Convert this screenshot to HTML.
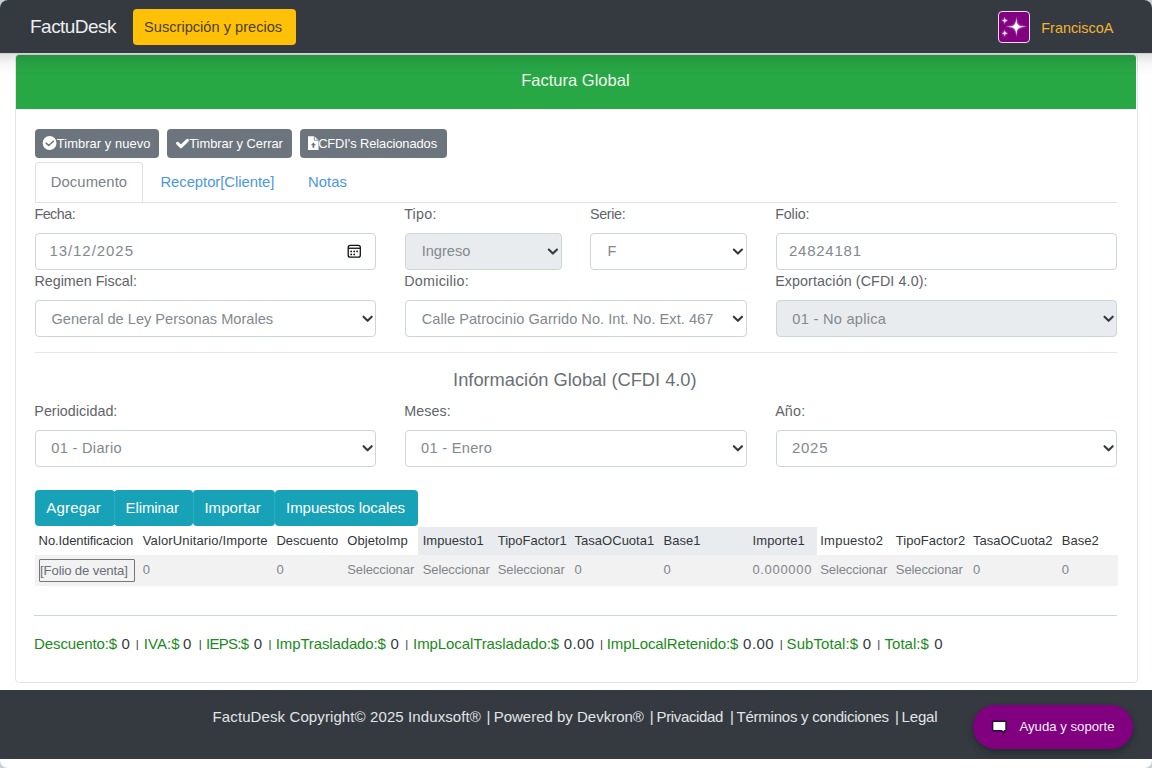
<!DOCTYPE html>
<html><head><meta charset="utf-8">
<style>
*{box-sizing:border-box;margin:0;padding:0}
html,body{width:1152px;height:768px;overflow:hidden;background:#c3d2d8}
body{font-family:"Liberation Sans",sans-serif;color:#212529;position:relative}
.x{position:absolute;white-space:nowrap;font-family:"Liberation Sans",sans-serif}
.b{position:absolute}
#page{position:absolute;left:0;top:0;width:1152px;height:768px;background:#fff;border-radius:8px;overflow:hidden}
.inp{position:absolute;border:1px solid #ced4da;border-radius:4px;background:#fff}
.dis{background:#e9ecef}
.chev{position:absolute;width:10px;height:6px}
</style></head><body>
<div id="page">
  <!-- navbar -->
  <div class="b" style="left:0;top:0;width:1152px;height:53px;background:#343a40"></div>
  <div class="b" style="left:0;top:53px;width:1152px;height:1px;background:#cfd1d3"></div>
  <div class="b" style="left:133px;top:9px;width:162.5px;height:35.5px;background:#ffc107;border-radius:4px"></div>
  <div class="b" style="left:997.5px;top:10.6px;width:32.5px;height:32.6px;background:#800080;border:1.5px solid #f3dcf3;border-radius:4px"></div>
  <svg class="b" style="left:997px;top:10px" width="34" height="34" viewBox="0 0 34 34">
    <defs><filter id="gl" x="-50%" y="-50%" width="200%" height="200%"><feGaussianBlur stdDeviation="1.1"/></filter></defs>
    <g fill="#ffb0ff" filter="url(#gl)" opacity="0.9">
      <path d="M19.3 5.8 C19.6 15.5 20.4 16.5 30 16.8 C20.4 17.1 19.6 18.1 19.3 27.4 C19 18.1 18.2 17.1 8.8 16.8 C18.2 16.5 19 15.5 19.3 5.8Z"/>
      <path d="M7.8 6.2 C8 10 8.3 10.3 12.3 10.5 C8.3 10.7 8 11 7.8 14.8 C7.6 11 7.3 10.7 3.3 10.5 C7.3 10.3 7.6 10 7.8 6.2Z"/>
      <path d="M7.8 19 C8 22.8 8.3 23.1 12.3 23.3 C8.3 23.5 8 23.8 7.8 27.6 C7.6 23.8 7.3 23.5 3.3 23.3 C7.3 23.1 7.6 22.8 7.8 19Z"/>
    </g>
    <g fill="#fff">
      <path d="M19.3 5.8 C19.6 15.5 20.4 16.5 30 16.8 C20.4 17.1 19.6 18.1 19.3 27.4 C19 18.1 18.2 17.1 8.8 16.8 C18.2 16.5 19 15.5 19.3 5.8Z"/>
      <path d="M7.8 6.2 C8 10 8.3 10.3 12.3 10.5 C8.3 10.7 8 11 7.8 14.8 C7.6 11 7.3 10.7 3.3 10.5 C7.3 10.3 7.6 10 7.8 6.2Z"/>
      <path d="M7.8 19 C8 22.8 8.3 23.1 12.3 23.3 C8.3 23.5 8 23.8 7.8 27.6 C7.6 23.8 7.3 23.5 3.3 23.3 C7.3 23.1 7.6 22.8 7.8 19Z"/>
    </g>
  </svg>
  <!-- card -->
  <div class="b" style="left:15px;top:54px;width:1122.5px;height:628.5px;border:1px solid #e2e4e6;border-radius:4px;background:#fff"></div>
  <div class="b" style="left:16px;top:55px;width:1120.2px;height:54px;background:#28a745;border-radius:3px 3px 0 0"></div>
  <!-- nav shadow -->
  <div class="b" style="left:0;top:54px;width:1152px;height:22px;background:linear-gradient(rgba(0,0,0,.12),rgba(0,0,0,.03) 45%,rgba(0,0,0,0))"></div>
  <!-- secondary buttons -->
  <div class="b" style="left:35px;top:128.6px;width:124px;height:29.7px;background:#6c757d;border-radius:4px"></div>
  <div class="b" style="left:167px;top:128.6px;width:125px;height:29.7px;background:#6c757d;border-radius:4px"></div>
  <div class="b" style="left:299.6px;top:128.6px;width:147px;height:29.7px;background:#6c757d;border-radius:4px"></div>
  <svg class="b" style="left:0;top:0" width="460" height="170">
    <circle cx="49.6" cy="143" r="6.9" fill="#fff"/>
    <path d="M46.1 143.1 L48.6 145.5 L53.4 141.2" fill="none" stroke="#6c757d" stroke-width="1.5" stroke-linecap="round" stroke-linejoin="round"/>
    <path d="M177.6 143.3 L181 146.6 L187.4 140.3" fill="none" stroke="#fff" stroke-width="3.1" stroke-linecap="round" stroke-linejoin="round"/>
    <path d="M308 136.2 H314.3 L318.5 140.2 V150 H308 Z" fill="#fff"/>
    <path d="M314.3 136.2 V140.2 H318.5" fill="none" stroke="#6c757d" stroke-width="0.8"/>
    <path d="M313.4 142.4 L316 145.2 H314.3 V147.8 H312.5 V145.2 H310.8 Z" fill="#6c757d"/>
  </svg>
  <!-- tabs -->
  <div class="b" style="left:35px;top:201.5px;width:1082px;height:1px;background:#dee2e6"></div>
  <div class="b" style="left:35.3px;top:162.4px;width:108px;height:40.1px;border:1px solid #dee2e6;border-bottom:none;border-radius:4px 4px 0 0;background:#fff"></div>
  <!-- row 1 inputs -->
  <div class="inp" style="left:35px;top:233px;width:341px;height:37px"></div>
  <div class="inp dis" style="left:405px;top:233px;width:157px;height:37px"></div>
  <div class="inp" style="left:590px;top:233px;width:157px;height:37px"></div>
  <div class="inp" style="left:776px;top:233px;width:341px;height:37px"></div>
  <!-- row 2 -->
  <div class="inp" style="left:35px;top:300px;width:341px;height:37px"></div>
  <div class="inp" style="left:405px;top:300px;width:342px;height:37px"></div>
  <div class="inp dis" style="left:776px;top:300px;width:341px;height:37px"></div>
  <div class="b" style="left:35px;top:352px;width:1082px;height:1px;background:#e3e6e9"></div>
  <!-- row 3 -->
  <div class="inp" style="left:35px;top:430px;width:341px;height:37px"></div>
  <div class="inp" style="left:405px;top:430px;width:342px;height:37px"></div>
  <div class="inp" style="left:776px;top:430px;width:341px;height:37px"></div>
  <svg class="b" style="left:0;top:0" width="1152" height="480">
    <g fill="none" stroke="#343a40" stroke-width="2.1" stroke-linecap="round" stroke-linejoin="round">
      <path d="M548.8 249.5 L552.9 253.6 L557 249.5"/>
      <path d="M733.8 249.5 L737.9 253.6 L742 249.5"/>
      <path d="M363.5 316.7 L367.6 320.8 L371.7 316.7"/>
      <path d="M733.8 316.7 L737.9 320.8 L742 316.7"/>
      <path d="M1104.5 316.7 L1108.6 320.8 L1112.7 316.7"/>
      <path d="M363.5 446.2 L367.6 450.3 L371.7 446.2"/>
      <path d="M733.8 446.2 L737.9 450.3 L742 446.2"/>
      <path d="M1104.5 446.2 L1108.6 450.3 L1112.7 446.2"/>
    </g>
    <g>
      <rect x="348.2" y="245.3" width="12.1" height="11.9" rx="2" fill="none" stroke="#111" stroke-width="1.3"/>
      <rect x="348.2" y="247.6" width="12.1" height="1.3" fill="#111"/>
      <circle cx="351.2" cy="251.4" r="0.9" fill="#111"/><circle cx="354.2" cy="251.4" r="0.9" fill="#111"/><circle cx="357.1" cy="251.4" r="0.9" fill="#111"/>
      <circle cx="351.2" cy="254.4" r="0.9" fill="#111"/><circle cx="354.2" cy="254.4" r="0.9" fill="#111"/>
    </g>
  </svg>
  <!-- info buttons -->
  <div class="b" style="left:34.8px;top:489.5px;width:80px;height:36.3px;background:#17a2b8;border-radius:4px"></div>
  <div class="b" style="left:114.3px;top:489.5px;width:79.2px;height:36.3px;background:#17a2b8;border-radius:4px"></div>
  <div class="b" style="left:193px;top:489.5px;width:82px;height:36.3px;background:#17a2b8;border-radius:4px"></div>
  <div class="b" style="left:274.5px;top:489.5px;width:143.7px;height:36.3px;background:#17a2b8;border-radius:4px"></div>
  <div class="b" style="left:114.3px;top:493px;width:0.8px;height:29.3px;background:#1fadc2"></div>
  <div class="b" style="left:192.8px;top:493px;width:0.8px;height:29.3px;background:#1fadc2"></div>
  <div class="b" style="left:274.3px;top:493px;width:0.8px;height:29.3px;background:#1fadc2"></div>
  <!-- table -->
  <div class="b" style="left:418.3px;top:526.5px;width:398.7px;height:28.5px;background:#e9ecef"></div>
  <div class="b" style="left:35px;top:555px;width:1082.5px;height:30.5px;background:#f2f2f2"></div>
  <div class="b" style="left:38.7px;top:558.9px;width:96.2px;height:22.9px;border:1px solid #767676;border-radius:1px;background:#f2f2f2"></div>
  <div class="b" style="left:34px;top:615px;width:1083px;height:1.2px;background:#c7d7e6"></div>
  <!-- footer -->
  <div class="b" style="left:0;top:690px;width:1152px;height:68.6px;background:#343a40"></div>
  <div class="b" style="left:972.5px;top:704.6px;width:160.8px;height:44.4px;background:#800080;border-radius:22.2px;box-shadow:0 3px 7px rgba(0,0,0,.3)"></div>
  <svg class="b" style="left:984px;top:712px" width="30" height="30" viewBox="0 0 30 30">
    <path d="M8.6 9.8 Q8.6 9.2 9.2 9.2 H21.4 Q22 9.2 22 9.8 V18.1 Q22 18.7 21.4 18.7 H20.3 L19.9 21.1 L17.6 18.7 H9.2 Q8.6 18.7 8.6 18.1 Z" fill="#fff" stroke="#2a0a2a" stroke-width="1.4" stroke-linejoin="round"/>
  </svg>
<span class="x" style="left:30.06px;top:17.02px;font-size:19px;line-height:19px;color:#eceeef;letter-spacing:-0.539px">FactuDesk</span>
<span class="x" style="left:144.12px;top:20.14px;font-size:14.6px;line-height:14.6px;color:#4a4025;letter-spacing:0.005px">Suscripción y precios</span>
<span class="x" style="left:1041.34px;top:20.61px;font-size:14.4px;line-height:14.4px;color:#f2b431">FranciscoA</span>
<span class="x" style="left:521.21px;top:72.03px;font-size:16.5px;line-height:16.5px;color:#eef8ee;letter-spacing:0.014px">Factura Global</span>
<span class="x" style="left:56.73px;top:137.58px;font-size:12.9px;line-height:12.9px;color:#ffffff;letter-spacing:0.078px">Timbrar y nuevo</span>
<span class="x" style="left:189.23px;top:137.58px;font-size:12.9px;line-height:12.9px;color:#ffffff;letter-spacing:-0.024px">Timbrar y Cerrar</span>
<span class="x" style="left:318.13px;top:137.58px;font-size:12.9px;line-height:12.9px;color:#ffffff;letter-spacing:-0.094px">CFDI's Relacionados</span>
<span class="x" style="left:50.81px;top:175.47px;font-size:14.8px;line-height:14.8px;color:#7a8288;letter-spacing:0.079px">Documento</span>
<span class="x" style="left:160.41px;top:175.47px;font-size:14.8px;line-height:14.8px;color:#4a97e2;letter-spacing:-0.021px">Receptor[Cliente]</span>
<span class="x" style="left:308.11px;top:175.47px;font-size:14.8px;line-height:14.8px;color:#4a97e2;letter-spacing:0.036px">Notas</span>
<span class="x" style="left:34.44px;top:206.65px;font-size:14.3px;line-height:14.3px;color:#5f6469;letter-spacing:-0.504px">Fecha:</span>
<span class="x" style="left:404.14px;top:206.65px;font-size:14.3px;line-height:14.3px;color:#5f6469;letter-spacing:0.259px">Tipo:</span>
<span class="x" style="left:589.94px;top:206.65px;font-size:14.3px;line-height:14.3px;color:#5f6469;letter-spacing:-0.332px">Serie:</span>
<span class="x" style="left:775.14px;top:206.65px;font-size:14.3px;line-height:14.3px;color:#5f6469;letter-spacing:-0.114px">Folio:</span>
<span class="x" style="left:34.44px;top:274.10px;font-size:14.3px;line-height:14.3px;color:#5f6469">Regimen Fiscal:</span>
<span class="x" style="left:404.14px;top:274.10px;font-size:14.3px;line-height:14.3px;color:#5f6469;letter-spacing:0.292px">Domicilio:</span>
<span class="x" style="left:775.14px;top:274.10px;font-size:14.3px;line-height:14.3px;color:#5f6469;letter-spacing:0.101px">Exportación (CFDI 4.0):</span>
<span class="x" style="left:34.34px;top:404.10px;font-size:14.3px;line-height:14.3px;color:#5f6469;letter-spacing:0.029px">Periodicidad:</span>
<span class="x" style="left:404.14px;top:404.10px;font-size:14.3px;line-height:14.3px;color:#5f6469;letter-spacing:0.121px">Meses:</span>
<span class="x" style="left:775.14px;top:404.10px;font-size:14.3px;line-height:14.3px;color:#5f6469;letter-spacing:0.193px">Año:</span>
<span class="x" style="left:49.40px;top:243.30px;font-size:15px;line-height:15px;color:#83898e;letter-spacing:0.947px">13/12/2025</span>
<span class="x" style="left:421.72px;top:243.64px;font-size:14.6px;line-height:14.6px;color:#83898e;letter-spacing:-0.015px">Ingreso</span>
<span class="x" style="left:607.42px;top:243.64px;font-size:14.6px;line-height:14.6px;color:#83898e">F</span>
<span class="x" style="left:789.00px;top:243.30px;font-size:15px;line-height:15px;color:#83898e;letter-spacing:0.750px">24824181</span>
<span class="x" style="left:51.42px;top:312.24px;font-size:14.6px;line-height:14.6px;color:#83898e;letter-spacing:0.008px">General de Ley Personas Morales</span>
<span class="x" style="left:421.72px;top:312.24px;font-size:14.6px;line-height:14.6px;color:#83898e;letter-spacing:0.027px">Calle Patrocinio Garrido No. Int. No. Ext. 467</span>
<span class="x" style="left:792.32px;top:312.24px;font-size:14.6px;line-height:14.6px;color:#83898e;letter-spacing:0.273px">01 - No aplica</span>
<span class="x" style="left:453.10px;top:370.71px;font-size:18.3px;line-height:18.3px;color:#6a7075;letter-spacing:-0.012px">Información Global (CFDI 4.0)</span>
<span class="x" style="left:51.22px;top:441.24px;font-size:14.6px;line-height:14.6px;color:#83898e;letter-spacing:0.317px">01 - Diario</span>
<span class="x" style="left:421.02px;top:441.24px;font-size:14.6px;line-height:14.6px;color:#83898e;letter-spacing:0.294px">01 - Enero</span>
<span class="x" style="left:792.00px;top:440.20px;font-size:15px;line-height:15px;color:#83898e;letter-spacing:0.708px">2025</span>
<span class="x" style="left:46.30px;top:500.30px;font-size:15px;line-height:15px;color:#ffffff;letter-spacing:0.171px">Agregar</span>
<span class="x" style="left:125.60px;top:500.30px;font-size:15px;line-height:15px;color:#ffffff;letter-spacing:-0.098px">Eliminar</span>
<span class="x" style="left:204.40px;top:500.30px;font-size:15px;line-height:15px;color:#ffffff;letter-spacing:0.063px">Importar</span>
<span class="x" style="left:286.10px;top:500.30px;font-size:15px;line-height:15px;color:#ffffff;letter-spacing:-0.066px">Impuestos locales</span>
<span class="x" style="left:38.62px;top:533.80px;font-size:13px;line-height:13px;color:#33373b;letter-spacing:-0.095px">No.Identificacion</span>
<span class="x" style="left:142.72px;top:533.80px;font-size:13px;line-height:13px;color:#33373b;letter-spacing:0.141px">ValorUnitario/Importe</span>
<span class="x" style="left:276.42px;top:533.80px;font-size:13px;line-height:13px;color:#33373b;letter-spacing:-0.045px">Descuento</span>
<span class="x" style="left:347.22px;top:533.80px;font-size:13px;line-height:13px;color:#33373b;letter-spacing:0.064px">ObjetoImp</span>
<span class="x" style="left:422.72px;top:533.80px;font-size:13px;line-height:13px;color:#33373b;letter-spacing:0.037px">Impuesto1</span>
<span class="x" style="left:497.72px;top:533.80px;font-size:13px;line-height:13px;color:#33373b;letter-spacing:0.011px">TipoFactor1</span>
<span class="x" style="left:574.62px;top:533.80px;font-size:13px;line-height:13px;color:#33373b;letter-spacing:0.010px">TasaOCuota1</span>
<span class="x" style="left:663.52px;top:533.80px;font-size:13px;line-height:13px;color:#33373b;letter-spacing:0.031px">Base1</span>
<span class="x" style="left:752.42px;top:533.80px;font-size:13px;line-height:13px;color:#33373b;letter-spacing:0.155px">Importe1</span>
<span class="x" style="left:820.22px;top:533.80px;font-size:13px;line-height:13px;color:#33373b;letter-spacing:0.250px">Impuesto2</span>
<span class="x" style="left:895.82px;top:533.80px;font-size:13px;line-height:13px;color:#33373b;letter-spacing:0.051px">TipoFactor2</span>
<span class="x" style="left:972.92px;top:533.80px;font-size:13px;line-height:13px;color:#33373b;letter-spacing:0.010px">TasaOCuota2</span>
<span class="x" style="left:1061.82px;top:533.80px;font-size:13px;line-height:13px;color:#33373b;letter-spacing:0.031px">Base2</span>
<span class="x" style="left:142.72px;top:562.90px;font-size:13px;line-height:13px;color:#80858a">0</span>
<span class="x" style="left:276.42px;top:562.90px;font-size:13px;line-height:13px;color:#80858a">0</span>
<span class="x" style="left:347.22px;top:562.90px;font-size:13px;line-height:13px;color:#80858a;letter-spacing:-0.094px">Seleccionar</span>
<span class="x" style="left:422.72px;top:562.90px;font-size:13px;line-height:13px;color:#80858a;letter-spacing:-0.094px">Seleccionar</span>
<span class="x" style="left:497.72px;top:562.90px;font-size:13px;line-height:13px;color:#80858a;letter-spacing:-0.094px">Seleccionar</span>
<span class="x" style="left:574.62px;top:562.90px;font-size:13px;line-height:13px;color:#80858a">0</span>
<span class="x" style="left:663.52px;top:562.90px;font-size:13px;line-height:13px;color:#80858a">0</span>
<span class="x" style="left:752.42px;top:562.90px;font-size:13px;line-height:13px;color:#80858a;letter-spacing:0.681px">0.000000</span>
<span class="x" style="left:820.22px;top:562.90px;font-size:13px;line-height:13px;color:#80858a;letter-spacing:-0.094px">Seleccionar</span>
<span class="x" style="left:895.82px;top:562.90px;font-size:13px;line-height:13px;color:#80858a;letter-spacing:-0.094px">Seleccionar</span>
<span class="x" style="left:972.92px;top:562.90px;font-size:13px;line-height:13px;color:#80858a">0</span>
<span class="x" style="left:1061.82px;top:562.90px;font-size:13px;line-height:13px;color:#80858a">0</span>
<span class="x" style="left:40.11px;top:563.83px;font-size:13.2px;line-height:13.2px;color:#6a7076;letter-spacing:-0.165px">[Folio de venta]</span>
<span class="x" style="left:34.10px;top:636.00px;font-size:15px;line-height:15px;color:#1a8a1a;letter-spacing:-0.123px">Descuento:$</span>
<span class="x" style="left:121.50px;top:636.00px;font-size:15px;line-height:15px;color:#343a40">0</span>
<span class="x" style="left:143.70px;top:636.00px;font-size:15px;line-height:15px;color:#1a8a1a;letter-spacing:0.080px">IVA:$</span>
<span class="x" style="left:183.10px;top:636.00px;font-size:15px;line-height:15px;color:#343a40">0</span>
<span class="x" style="left:206.10px;top:636.00px;font-size:15px;line-height:15px;color:#1a8a1a;letter-spacing:-0.741px">IEPS:$</span>
<span class="x" style="left:253.70px;top:636.00px;font-size:15px;line-height:15px;color:#343a40">0</span>
<span class="x" style="left:275.80px;top:636.00px;font-size:15px;line-height:15px;color:#1a8a1a;letter-spacing:-0.137px">ImpTrasladado:$</span>
<span class="x" style="left:390.40px;top:636.00px;font-size:15px;line-height:15px;color:#343a40">0</span>
<span class="x" style="left:413.10px;top:636.00px;font-size:15px;line-height:15px;color:#1a8a1a;letter-spacing:-0.099px">ImpLocalTrasladado:$</span>
<span class="x" style="left:563.70px;top:636.00px;font-size:15px;line-height:15px;color:#343a40;letter-spacing:0.399px">0.00</span>
<span class="x" style="left:606.80px;top:636.00px;font-size:15px;line-height:15px;color:#1a8a1a;letter-spacing:-0.107px">ImpLocalRetenido:$</span>
<span class="x" style="left:743.10px;top:636.00px;font-size:15px;line-height:15px;color:#343a40;letter-spacing:0.466px">0.00</span>
<span class="x" style="left:786.60px;top:636.00px;font-size:15px;line-height:15px;color:#1a8a1a;letter-spacing:0.068px">SubTotal:$</span>
<span class="x" style="left:862.70px;top:636.00px;font-size:15px;line-height:15px;color:#343a40">0</span>
<span class="x" style="left:884.50px;top:636.00px;font-size:15px;line-height:15px;color:#1a8a1a;letter-spacing:0.033px">Total:$</span>
<span class="x" style="left:934.30px;top:636.00px;font-size:15px;line-height:15px;color:#343a40">0</span>
<span class="x" style="left:135.81px;top:638.97px;font-size:11.5px;line-height:11.5px;color:#343a40">|</span>
<span class="x" style="left:198.81px;top:638.97px;font-size:11.5px;line-height:11.5px;color:#343a40">|</span>
<span class="x" style="left:268.61px;top:638.97px;font-size:11.5px;line-height:11.5px;color:#343a40">|</span>
<span class="x" style="left:405.31px;top:638.97px;font-size:11.5px;line-height:11.5px;color:#343a40">|</span>
<span class="x" style="left:600.01px;top:638.97px;font-size:11.5px;line-height:11.5px;color:#343a40">|</span>
<span class="x" style="left:779.81px;top:638.97px;font-size:11.5px;line-height:11.5px;color:#343a40">|</span>
<span class="x" style="left:877.21px;top:638.97px;font-size:11.5px;line-height:11.5px;color:#343a40">|</span>
<span class="x" style="left:212.60px;top:709.00px;font-size:15px;line-height:15px;color:#e2e5e7;letter-spacing:0.102px">FactuDesk Copyright© 2025 Induxsoft®</span>
<span class="x" style="left:493.70px;top:709.00px;font-size:15px;line-height:15px;color:#e2e5e7;letter-spacing:-0.005px">Powered by Devkron®</span>
<span class="x" style="left:656.50px;top:709.00px;font-size:15px;line-height:15px;color:#e2e5e7;letter-spacing:-0.350px">Privacidad</span>
<span class="x" style="left:736.60px;top:709.00px;font-size:15px;line-height:15px;color:#e2e5e7;letter-spacing:-0.242px">Términos y condiciones</span>
<span class="x" style="left:901.60px;top:709.00px;font-size:15px;line-height:15px;color:#e2e5e7;letter-spacing:-0.176px">Legal</span>
<span class="x" style="left:486.40px;top:709.00px;font-size:15px;line-height:15px;color:#e2e5e7">|</span>
<span class="x" style="left:649.80px;top:709.00px;font-size:15px;line-height:15px;color:#e2e5e7">|</span>
<span class="x" style="left:729.90px;top:709.00px;font-size:15px;line-height:15px;color:#e2e5e7">|</span>
<span class="x" style="left:894.90px;top:709.00px;font-size:15px;line-height:15px;color:#e2e5e7">|</span>
<span class="x" style="left:1019.41px;top:720.23px;font-size:13.2px;line-height:13.2px;color:#f8eef8">Ayuda y soporte</span>
</div>
</body></html>
